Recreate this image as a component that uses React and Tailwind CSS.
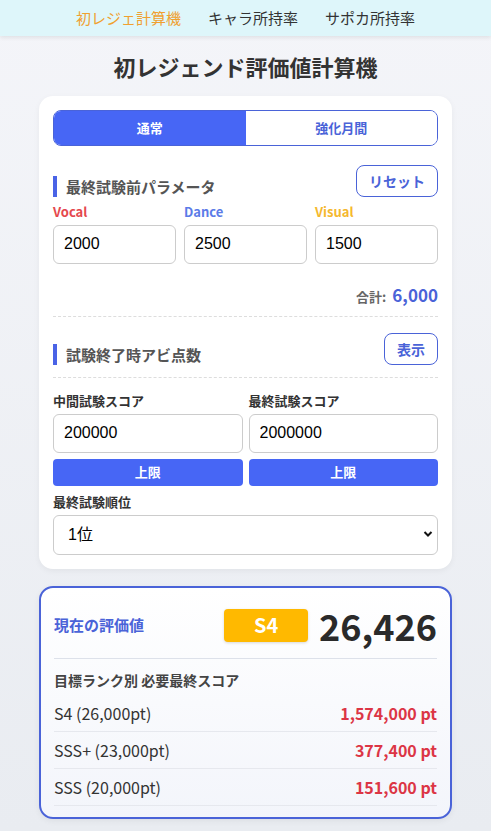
import { useState } from "react";

const jp = { fontFamily: '"Noto Sans CJK JP", "Noto Sans", sans-serif' };

function SectionTitle({ children, button }) {
  return (
    <div className="flex items-end justify-between">
      <div className="flex items-end gap-[9px]">
        <span className="w-[4px] h-[21px] bg-[#4a63e6]" />
        <h2 className="text-[15px] font-bold text-[#555] leading-[20px]">{children}</h2>
      </div>
      <button className="h-[32px] px-[12px] rounded-lg border border-[#4a63d8] text-[#4a63d8] text-[14px] font-bold bg-white">
        {button}
      </button>
    </div>
  );
}

function NumInput({ value }) {
  return (
    <input
      defaultValue={value}
      className="w-full h-[39px] border border-[#ccc] rounded-[6px] px-[10px] text-[16px] text-black bg-white"
      style={{ fontFamily: '"Liberation Sans", Arial, sans-serif' }}
    />
  );
}

function TargetRow({ label, value }) {
  return (
    <div className="flex items-center justify-between h-[37px] border-b border-[#e6e8ee]">
      <span className="text-[16px] text-[#333]">{label}</span>
      <span className="text-[16px] font-bold text-[#dc3545]">{value}</span>
    </div>
  );
}

export default function App() {
  const [mode, setMode] = useState("normal");
  return (
    <div className="min-h-screen bg-gradient-to-b from-[#f4f5f9] to-[#e9ecf1] text-[#333]" style={jp}>
      {/* ナビ */}
      <header className="h-[36px] bg-[#def6fa] shadow-[0_2px_4px_rgba(0,0,0,0.08)] flex items-center justify-center gap-[27px] text-[15px]">
        <span className="text-[#f0a030]">初レジェ計算機</span>
        <span className="text-[#333]">キャラ所持率</span>
        <span className="text-[#333]">サポカ所持率</span>
      </header>

      <main className="px-[39px] pb-[13px]">
        <h1 className="text-[22px] font-bold text-[#333] text-center pt-[15px] pb-[15px] leading-[30px]">
          初レジェンド評価値計算機
        </h1>

        {/* 入力カード */}
        <section className="bg-white rounded-[14px] p-[14px] shadow-[0_2px_6px_rgba(0,0,0,0.05)]">
          <div className="flex h-[36px] rounded-lg border border-[#4a63d8] overflow-hidden">
            <button
              onClick={() => setMode("normal")}
              className={`flex-1 text-[13px] font-bold ${mode === "normal" ? "bg-[#4766f5] text-white" : "bg-white text-[#4a63d8]"}`}
            >
              通常
            </button>
            <button
              onClick={() => setMode("boost")}
              className={`flex-1 text-[13px] font-bold ${mode === "boost" ? "bg-[#4766f5] text-white" : "bg-white text-[#4a63d8]"}`}
            >
              強化月間
            </button>
          </div>

          <div className="mt-[19px]">
            <SectionTitle button="リセット">最終試験前パラメータ</SectionTitle>
          </div>

          <div className="grid grid-cols-3 gap-[8px] mt-[5px]">
            <div>
              <label className="block text-[13px] font-bold text-[#e5484d] mb-[3px]">Vocal</label>
              <NumInput value="2000" />
            </div>
            <div>
              <label className="block text-[13px] font-bold text-[#5b7be8] mb-[3px]">Dance</label>
              <NumInput value="2500" />
            </div>
            <div>
              <label className="block text-[13px] font-bold text-[#f5b82e] mb-[3px]">Visual</label>
              <NumInput value="1500" />
            </div>
          </div>

          <div className="flex items-baseline justify-end gap-[6px] mt-[18px]">
            <span className="text-[13px] font-bold text-[#666]">合計:</span>
            <span className="text-[17px] font-bold text-[#4a63d8]">6,000</span>
          </div>

          <div className="border-t border-dashed border-[#ddd] mt-[9px]" />

          <div className="mt-[16px]">
            <SectionTitle button="表示">試験終了時アビ点数</SectionTitle>
          </div>

          <div className="border-t border-dashed border-[#ddd] mt-[12px]" />

          <div className="grid grid-cols-2 gap-[6px] mt-[13px]">
            <div>
              <label className="block text-[13px] font-bold text-[#333] mb-[3px]">中間試験スコア</label>
              <NumInput value="200000" />
              <button className="w-full h-[27px] mt-[6px] rounded-[4px] bg-[#4766f5] text-white text-[13px] font-bold">上限</button>
            </div>
            <div>
              <label className="block text-[13px] font-bold text-[#333] mb-[3px]">最終試験スコア</label>
              <NumInput value="2000000" />
              <button className="w-full h-[27px] mt-[6px] rounded-[4px] bg-[#4766f5] text-white text-[13px] font-bold">上限</button>
            </div>
          </div>

          <label className="block text-[13px] font-bold text-[#333] mt-[6px] mb-[4px]">最終試験順位</label>
          <div className="relative">
            <select
              className="w-full h-[40px] border border-[#ccc] rounded-[6px] pl-[14px] text-[16px] text-black bg-white appearance-none"
              style={{ fontFamily: '"Liberation Sans", "Noto Sans CJK JP", sans-serif' }}
            >
              <option>1位</option>
              <option>2位</option>
              <option>3位</option>
            </select>
            <svg className="absolute right-[5px] top-[15px] pointer-events-none" width="10" height="8" viewBox="0 0 10 8">
              <path d="M1.5 2 L5 5.5 L8.5 2" fill="none" stroke="#111" strokeWidth="2" />
            </svg>
          </div>
        </section>

        {/* 結果カード */}
        <section className="mt-[17px] rounded-[14px] border-2 border-[#4a63d8] bg-gradient-to-b from-white to-[#f3f5fb] px-[13px] pt-[17px] pb-[11px] shadow-[0_2px_6px_rgba(0,0,0,0.06)]">
          <div className="flex items-center justify-between pb-[13px] border-b border-[#dde1ea]">
            <span className="text-[15px] font-bold text-[#4a63d8]">現在の評価値</span>
            <div className="flex items-center gap-[11px]">
              <span className="w-[84px] h-[33px] rounded-[4px] bg-[#ffb900] text-white text-[20px] font-bold flex items-center justify-center shadow-[0_1px_3px_rgba(0,0,0,0.15)]">
                S4
              </span>
              <span className="text-[36px] font-bold text-[#2a2a2a] leading-[40px]">26,426</span>
            </div>
          </div>
          <h3 className="text-[14px] font-bold text-[#444] mt-[11px] mb-[4px]">目標ランク別 必要最終スコア</h3>
          <TargetRow label="S4 (26,000pt)" value="1,574,000 pt" />
          <TargetRow label="SSS+ (23,000pt)" value="377,400 pt" />
          <TargetRow label="SSS (20,000pt)" value="151,600 pt" />
        </section>
      </main>
    </div>
  );
}
